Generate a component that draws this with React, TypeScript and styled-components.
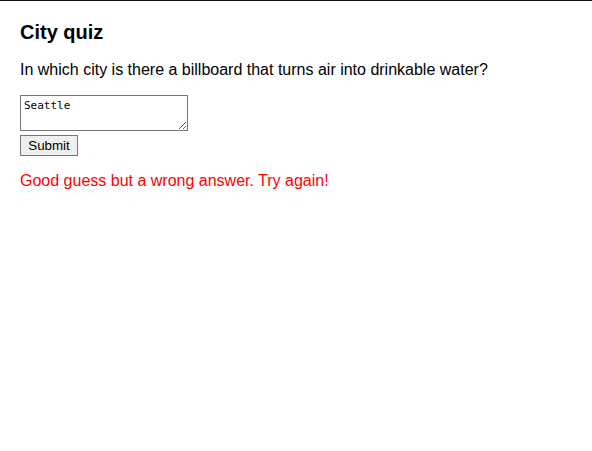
import React, { useState } from "react";
import styled, { createGlobalStyle } from "styled-components";

const Global = createGlobalStyle`
  html, body { margin: 0; padding: 0; background: #fff; }
  body { font-family: "Liberation Sans", Arial, sans-serif; color: #000; }
`;

const Page = styled.div`
  border-top: 1px solid #111;
  padding: 20px 20px;
  display: flex;
  flex-direction: column;
  align-items: flex-start;
`;

const Title = styled.h3`
  margin: 0 0 0;
  font-size: 20px;
  line-height: 23px;
  font-weight: bold;
`;

const Question = styled.p`
  margin: 17px 0 0;
  font-size: 16px;
  line-height: 18px;
`;

const Form = styled.form`
  margin-top: 16px;
  display: flex;
  flex-direction: column;
  align-items: flex-start;
  gap: 4px;
`;

const Answer = styled.textarea`
  box-sizing: border-box;
  width: 168px;
  height: 36px;
  margin: 0;
  padding: 3px 2px 2px 3px;
  border: 1px solid #767676;
  font-family: "DejaVu Sans Mono", "Liberation Mono", monospace;
  font-size: 11px;
  line-height: 14px;
  resize: both;
`;

const SubmitButton = styled.button`
  box-sizing: border-box;
  height: 21px;
  width: 58px;
  padding: 0 6px;
  margin: 0;
  font-family: "Liberation Sans", Arial, sans-serif;
  font-size: 13.33px;
  color: #000;
  background: #efefef;
  border: 1px solid #767676;
  border-radius: 0;
`;

const Feedback = styled.p<{ $error?: boolean }>`
  margin: 16px 0 0;
  font-size: 16px;
  line-height: 18px;
  color: ${(p) => (p.$error ? "#ff0000" : "#008000")};
`;

export default function App() {
  const [answer, setAnswer] = useState("Seattle");
  return (
    <Page>
      <Global />
      <Title>City quiz</Title>
      <Question>In which city is there a billboard that turns air into drinkable water?</Question>
      <Form onSubmit={(e) => e.preventDefault()}>
        <Answer value={answer} onChange={(e) => setAnswer(e.target.value)} />
        <SubmitButton type="submit">Submit</SubmitButton>
      </Form>
      <Feedback $error>Good guess but a wrong answer. Try again!</Feedback>
    </Page>
  );
}
